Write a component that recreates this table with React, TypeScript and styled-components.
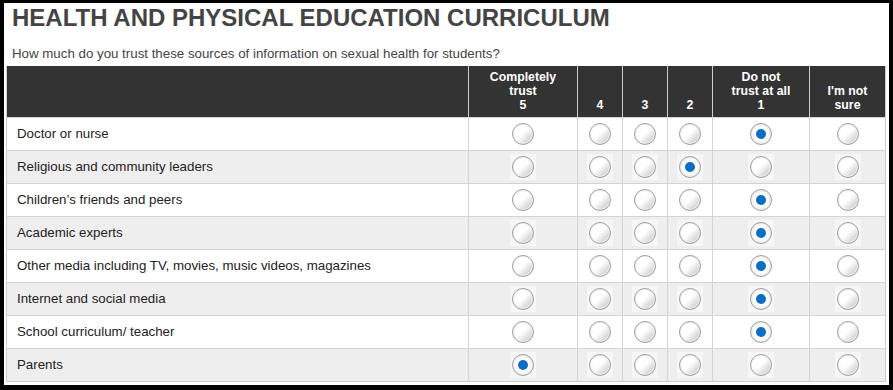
import styled, { createGlobalStyle } from 'styled-components';

const GlobalStyle = createGlobalStyle`
  html, body {
    margin: 0;
    padding: 0;
    background: #000000;
  }
  body {
    font-family: "Liberation Sans", Arial, sans-serif;
  }
`;

const Frame = styled.div`
  width: 893px;
  height: 390px;
  box-sizing: border-box;
  padding: 3px 4px 5px 4px;
  background: #000000;
`;

const Panel = styled.div`
  height: 100%;
  background: #ffffff;
  padding: 0 4px 0 2px;
  box-sizing: border-box;
  display: flex;
  flex-direction: column;
`;

const Title = styled.h1`
  margin: 0;
  padding: 2px 0 0 6px;
  font-size: 24px;
  line-height: 26px;
  font-weight: bold;
  color: #444444;
`;

const Question = styled.p`
  margin: 0;
  padding: 15px 0 0 6px;
  font-size: 13.3px;
  line-height: 15px;
  color: #444444;
  height: 20px;
`;

const Grid = styled.table`
  border-collapse: collapse;
  table-layout: fixed;
  width: 879px;
  border: 1px solid #cccccc;
  border-top: none;
`;

const HeadCell = styled.th<{ $w: number }>`
  width: ${(p) => p.$w}px;
  background: #333333;
  color: #ffffff;
  font-size: 12.3px;
  line-height: 14px;
  font-weight: bold;
  vertical-align: bottom;
  text-align: center;
  padding: 0 2px 5px;
  height: 51px;
  box-sizing: border-box;
  border-left: 1px solid #cccccc;
  &:first-child {
    border-left: none;
  }
`;

const Row = styled.tr<{ $shade: boolean }>`
  background: ${(p) => (p.$shade ? '#eeeeee' : '#ffffff')};
`;

const Label = styled.td`
  height: 32px;
  padding: 0 0 0 10px;
  font-size: 13.3px;
  color: #222222;
  border-top: 1px solid #d4d4d4;
  vertical-align: middle;
`;

const Cell = styled.td`
  height: 32px;
  padding: 0;
  text-align: center;
  vertical-align: middle;
  border-top: 1px solid #d4d4d4;
  border-left: 1px solid #d4d4d4;
`;

const RadioTile = styled.span<{ $shade: boolean }>`
  display: inline-flex;
  align-items: center;
  justify-content: center;
  width: 26px;
  height: 26px;
  background: ${(p) => (p.$shade ? '#f6f6f6' : 'transparent')};
  vertical-align: middle;
`;

const Radio = styled.span<{ $on: boolean }>`
  display: inline-flex;
  align-items: center;
  justify-content: center;
  width: 22px;
  height: 22px;
  box-sizing: border-box;
  border-radius: 50%;
  border: 1px solid #a0a0a0;
  background: ${(p) =>
    p.$on
      ? 'radial-gradient(circle at 50% 50%, #ffffff 0%, #ffffff 45%, #d6d6d6 100%)'
      : 'linear-gradient(135deg, #ffffff 0%, #ffffff 48%, #d8d8d8 78%, #b4b4b4 100%)'};
  box-shadow: inset 0 0 0 1px #f0f0f0;
`;

const Dot = styled.span`
  width: 10px;
  height: 10px;
  border-radius: 50%;
  background: #0a6fc2;
`;

const columns: { w: number; lines: string[] }[] = [
  { w: 462, lines: [] },
  { w: 109, lines: ['Completely', 'trust', '5'] },
  { w: 45, lines: ['4'] },
  { w: 45, lines: ['3'] },
  { w: 45, lines: ['2'] },
  { w: 97, lines: ['Do not', 'trust at all', '1'] },
  { w: 76, lines: ["I'm not", 'sure'] },
];

const rows: { label: string; pick: number }[] = [
  { label: 'Doctor or nurse', pick: 4 },
  { label: 'Religious and community leaders', pick: 3 },
  { label: 'Children\u2019s friends and peers', pick: 4 },
  { label: 'Academic experts', pick: 4 },
  { label: 'Other media including TV, movies, music videos, magazines', pick: 4 },
  { label: 'Internet and social media', pick: 4 },
  { label: 'School curriculum/ teacher', pick: 4 },
  { label: 'Parents', pick: 0 },
];

export default function App() {
  return (
    <>
      <GlobalStyle />
      <Frame>
        <Panel>
          <Title>HEALTH AND PHYSICAL EDUCATION CURRICULUM</Title>
          <Question>How much do you trust these sources of information on sexual health for students?</Question>
          <Grid>
            <thead>
              <tr>
                {columns.map((c, i) => (
                  <HeadCell key={i} $w={c.w}>
                    {c.lines.map((l, j) => (
                      <div key={j}>{l}</div>
                    ))}
                  </HeadCell>
                ))}
              </tr>
            </thead>
            <tbody>
              {rows.map((r, i) => {
                const shade = i % 2 === 1;
                return (
                  <Row key={r.label} $shade={shade}>
                    <Label>{r.label}</Label>
                    {[0, 1, 2, 3, 4, 5].map((k) => (
                      <Cell key={k}>
                        <RadioTile $shade={shade}>
                          <Radio $on={r.pick === k}>{r.pick === k && <Dot />}</Radio>
                        </RadioTile>
                      </Cell>
                    ))}
                  </Row>
                );
              })}
            </tbody>
          </Grid>
        </Panel>
      </Frame>
    </>
  );
}
